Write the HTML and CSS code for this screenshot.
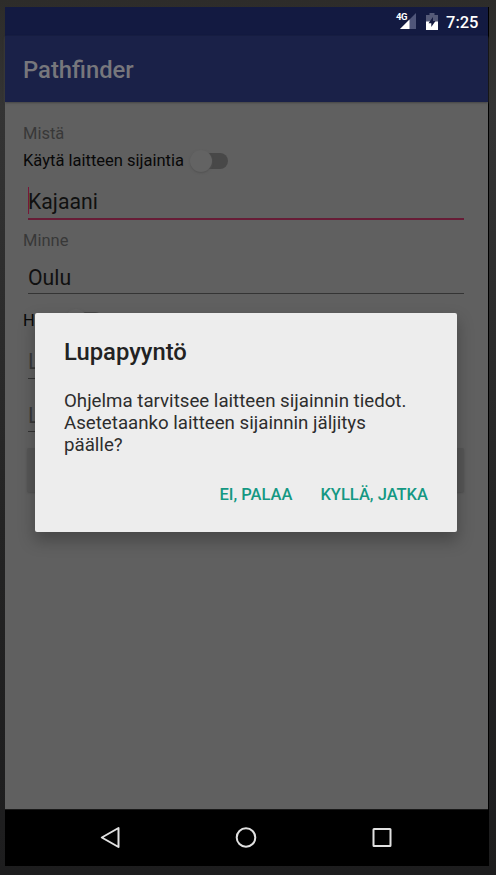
FILE: index.html
```html
<!DOCTYPE html>
<html lang="fi">
<head>
<meta charset="utf-8">
<title>Pathfinder</title>
<link rel="stylesheet" href="styles.css">
</head>
<body>
<div class="screen">
  <header class="status">
    <span class="network">4G</span>
    <svg class="signal" width="17" height="17" viewBox="0 0 17 17"><path d="M16 0V16H0Z" fill="#50567a"/><path d="M9.5 6.5V16H0Z" fill="#fff"/></svg>
    <svg class="battery" width="12" height="17" viewBox="0 0 12 17"><path d="M3.5 0h5v2H12v7H0V2h3.500Z" fill="#555a78"/><path d="M0 8.500h12V17H0Z" fill="#fff"/><path d="M7 4 2.500 10.300H5.300V14L9.500 8H7Z" fill="#151b40"/></svg>
    <time class="clock">7:25</time>
  </header>
  <div class="appbar"><h1>Pathfinder</h1></div>
  <main class="form">
    <div class="label">Mistä</div>
    <div class="toggle"><span>Käytä laitteen sijaintia</span><i class="switch"></i></div>
    <div class="field active">Kajaani</div>
    <div class="label second">Minne</div>
    <div class="field destination">Oulu</div>
    <div class="toggle time"><span>H</span><i class="switch"></i></div>
    <div class="field hint first">L</div>
    <div class="field hint">L</div>
    <div class="submit"></div>
  </main>
  <nav class="navbar">
    <svg width="24" height="24" viewBox="0 0 24 24"><path d="M20.500 2v19L3.800 11.500Z"/></svg>
    <svg width="24" height="24" viewBox="0 0 24 24"><circle cx="12" cy="11.500" r="9.300"/></svg>
    <svg width="24" height="24" viewBox="0 0 24 24"><rect x="3.500" y="3" width="17" height="17" rx=".5"/></svg>
  </nav>
  <section class="dialog" role="dialog">
    <h2>Lupapyyntö</h2>
    <p>Ohjelma tarvitsee laitteen sijainnin tiedot.<br>Asetetaanko laitteen sijainnin jäljitys<br>päälle?</p>
    <div class="actions"><button class="no">EI, PALAA</button><button class="yes">KYLLÄ, JATKA</button></div>
  </section>
</div>
</body>
</html>
```
FILE: styles.css
```css
* { box-sizing: border-box; }
body {
  margin: 0;
  width: 496px;
  height: 875px;
  padding: 7px 8px 9px 5px;
  overflow: hidden;
  background: linear-gradient(#2d2c2a, #343434 12%, #242424 60%, #1d1d1e);
  font-family: Roboto, "Liberation Sans", sans-serif;
}
.screen {
  position: relative;
  display: flex;
  flex-direction: column;
  width: 483px;
  height: 859px;
  background: #606060;
  box-shadow: 1px 0 #000;
}
.status {
  display: flex;
  height: 29px;
  padding: 6px 10px 0 391px;
  background: #131a41;
  color: #fff;
}
.network { position: relative; z-index: 1; width: 10px; font-size: 9.500px; line-height: 8px; font-weight: 700; letter-spacing: -.5px; white-space: nowrap; }
.signal { margin-left: -6px; flex: none; }
.battery { margin-left: 9px; flex: none; }
.clock { margin-left: 8px; font-size: 16.500px; line-height: 19px; font-weight: 500; }
.appbar {
  display: flex;
  align-items: center;
  height: 66px;
  padding: 1px 18px 0;
  background: #1a2148;
  box-shadow: 0 1px 2px #444;
}
h1 { margin: 0; color: #77777c; font-size: 23.800px; font-weight: 500; }
.form { height: 707px; padding: 21px 24px 0 18px; color: #101010; }
.label { height: 22px; font-size: 16.500px; line-height: 22px; color: #383838; }
.label.second { margin-top: 10px; }
.toggle { display: flex; align-items: center; height: 31px; font-size: 16.500px; color: #080808; }
.switch { position: relative; width: 33px; height: 16px; margin-left: 11px; border-radius: 8px; background: #484848; }
.switch::before { content: ""; position: absolute; left: -5px; top: -3px; width: 22px; height: 22px; border-radius: 50%; background: #636363; box-shadow: 0 1px 2px #525252; }
.field { width: 436px; height: 43px; margin-left: 5px; border-bottom: 1px solid #343434; font-size: 21.200px; line-height: 52px; }
.active { position: relative; height: 44px; border-bottom: 2px solid #671c36; }
.active::before { content: ""; position: absolute; left: 0; top: 11px; width: 1px; height: 27px; background: #771737; }
.destination { height: 42px; }
.time { height: 32px; margin-top: 10px; }
.time .switch { margin-left: 35px; }
.hint { width: 420px; height: 42px; margin-top: 11px; line-height: 52px; color: #393939; }
.hint.first { height: 43px; margin-top: 0; }
.submit { width: 437px; height: 44px; margin: 16px 0 0 4px; border-radius: 2px; background: #575757; box-shadow: 0 1px 2px #505050; }
.navbar {
  display: flex;
  justify-content: space-between;
  align-items: center;
  height: 57px;
  padding: 0 94px 1px 93px;
  background: #000;
  border-top: 1px solid #191919;
}
.navbar svg { fill: none; stroke: #e1e1e1; stroke-width: 2; stroke-linejoin: round; }
.dialog {
  position: absolute;
  left: 30px;
  top: 306px;
  width: 422px;
  height: 219px;
  padding: 25px 29px 0;
  border-radius: 2px;
  background: #ededed;
  box-shadow: 0 8px 16px 1px rgba(0,0,0,.26);
  color: #222;
}
h2 { margin: 0; height: 28px; font-size: 23.800px; line-height: 28px; font-weight: 500; }
p { margin: 24px 0 0; font-size: 18.700px; line-height: 22px; white-space: nowrap; color: #2d2d2d; }
.actions { display: flex; gap: 28px; justify-content: flex-end; margin-top: 28px; }
button { padding: 0; border: 0; background: none; color: #149883; font: 500 16.500px/22px Roboto, sans-serif; white-space: nowrap; }
```
